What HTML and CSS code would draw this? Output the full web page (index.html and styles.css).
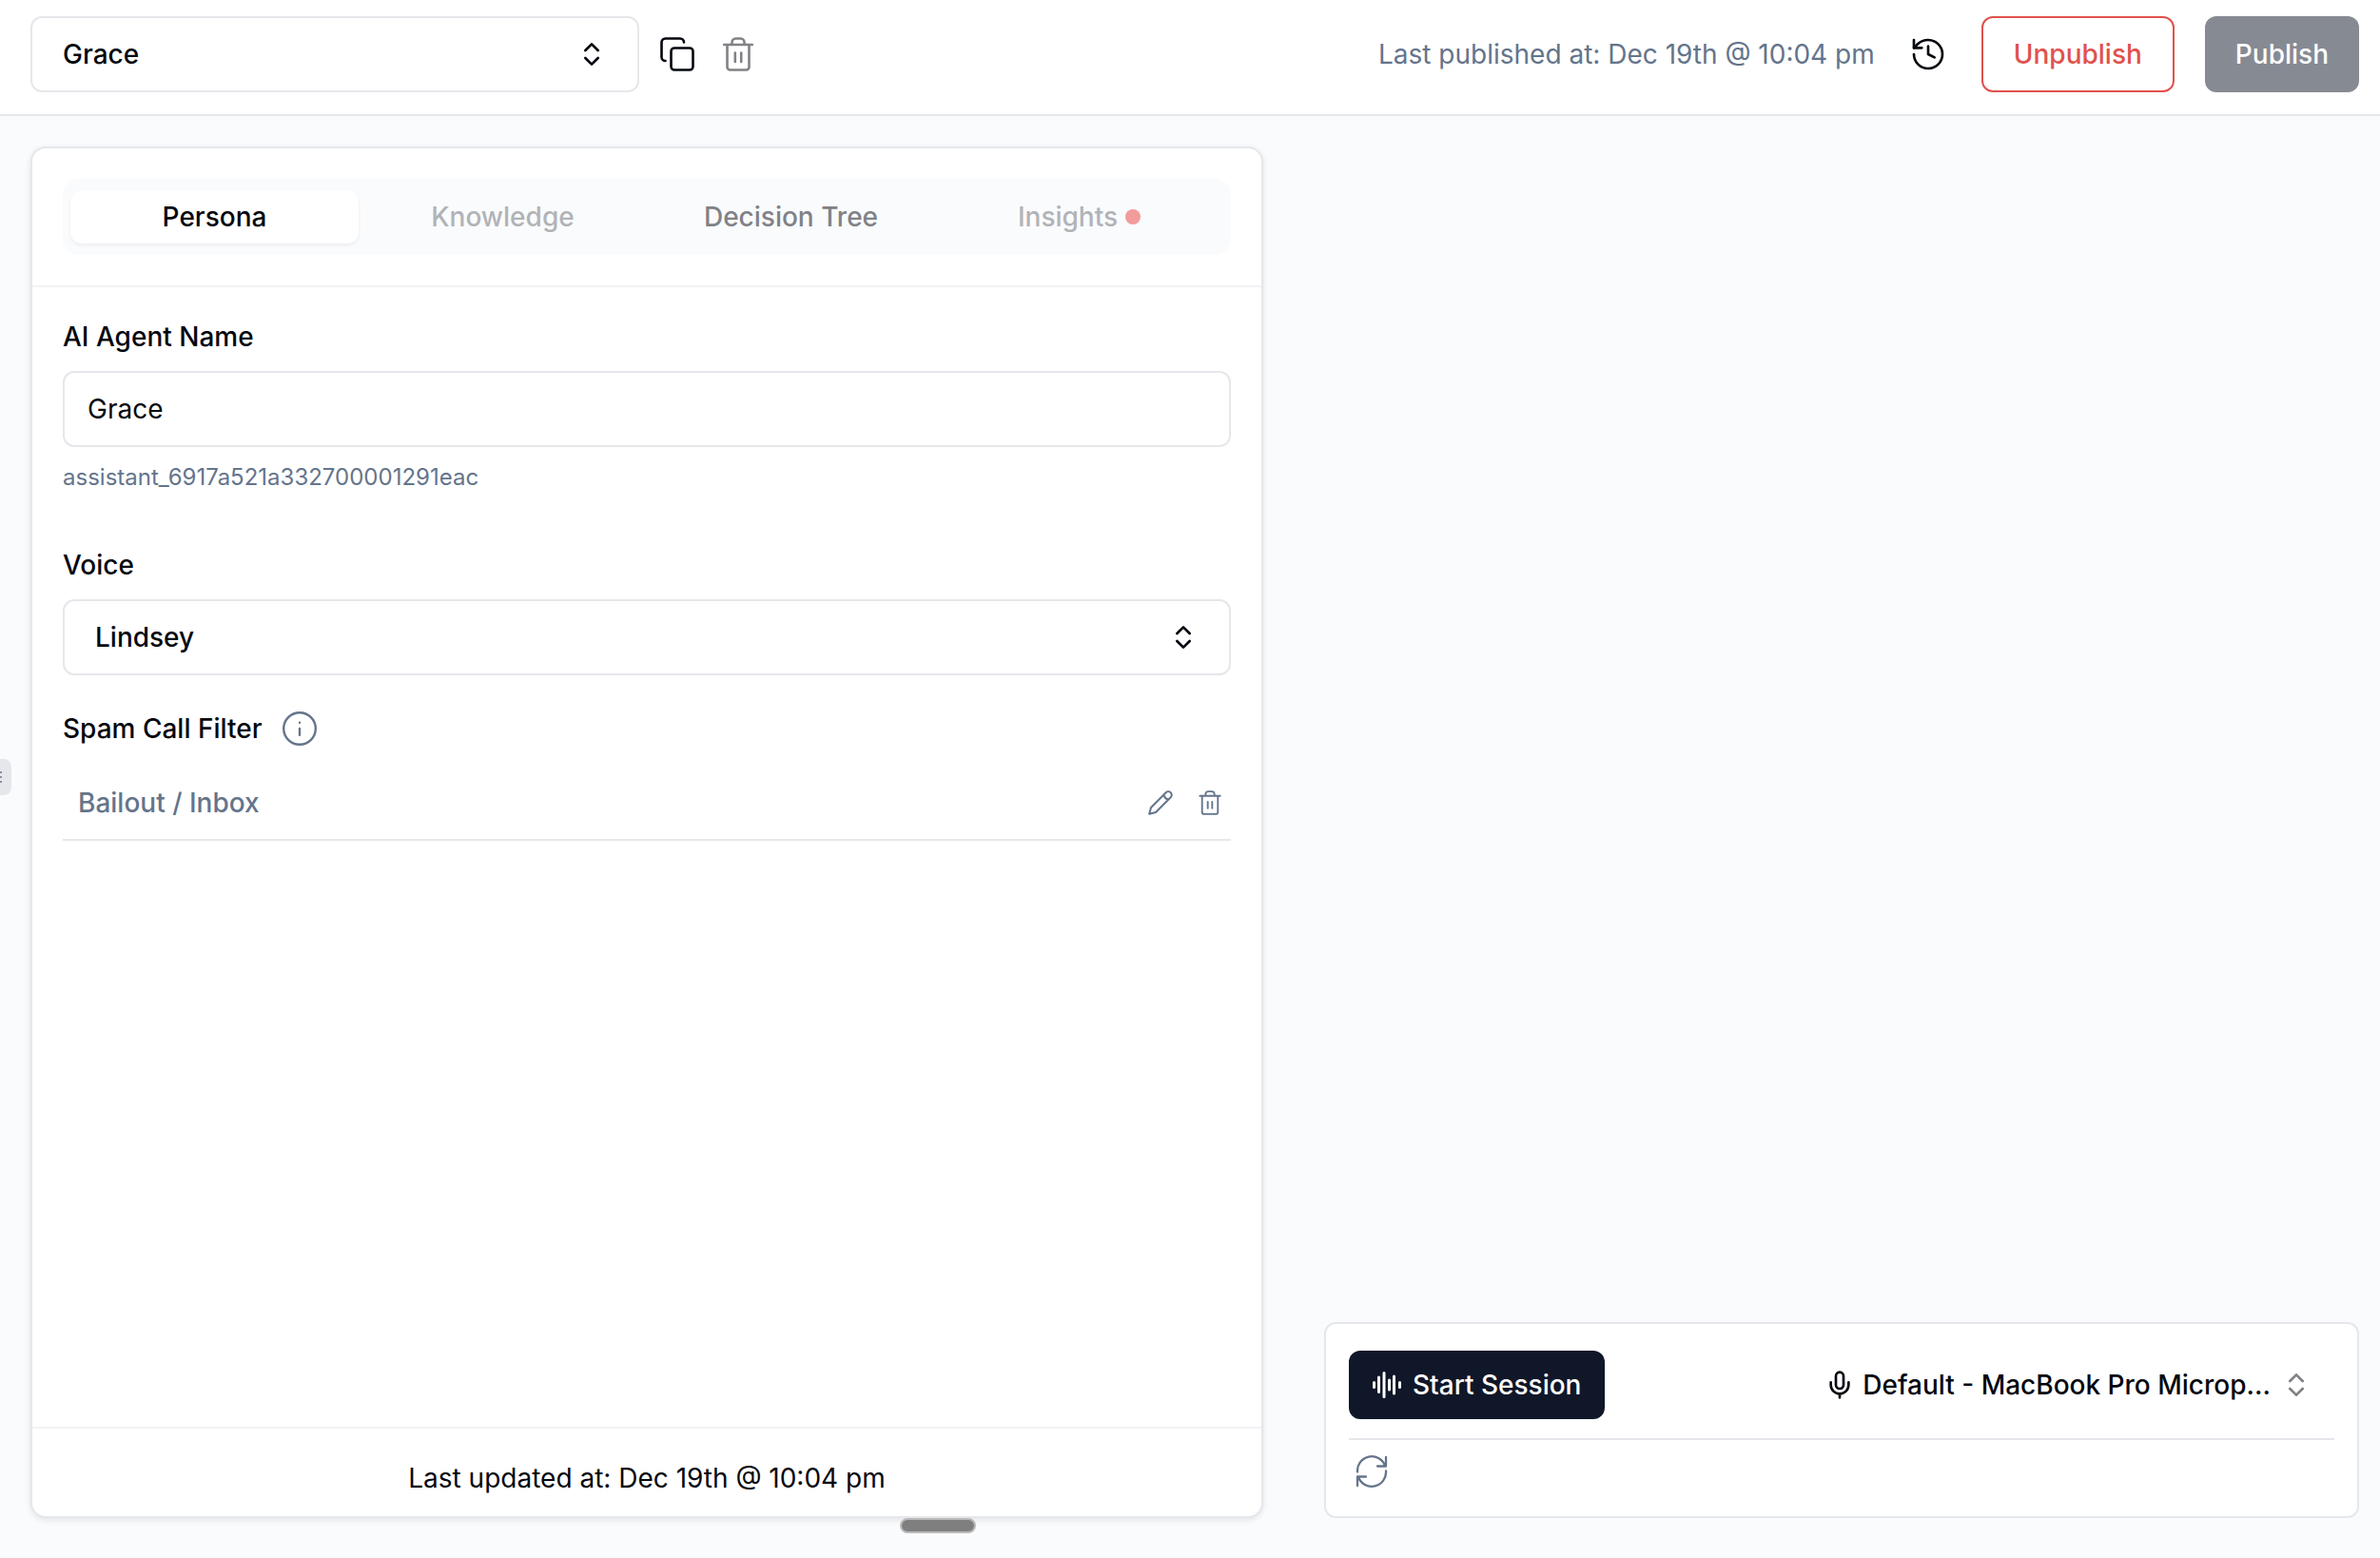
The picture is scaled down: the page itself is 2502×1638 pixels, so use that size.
FILE: index.html
```html
<!DOCTYPE html>
<html lang="en">
<head>
<meta charset="utf-8">
<meta name="viewport" content="width=device-width, initial-scale=1">
<title>Grace – AI Agent</title>
<link rel="stylesheet" href="styles.css">
</head>
<body>
<svg class="sprite" aria-hidden="true">
  <symbol id="updown" viewBox="0 0 24 24"><path d="m7 15 5 5 5-5M7 9l5-5 5 5"/></symbol>
  <symbol id="copy" viewBox="0 0 36 36"><rect x="11.500" y="11.500" width="23" height="23" rx="3.500"/><path d="M5.500 25a4 4 0 0 1-4-4V5.500a4 4 0 0 1 4-4h15.500a4 4 0 0 1 4 4"/></symbol>
  <symbol id="trash" viewBox="0 0 32 36"><path d="M1.200 8h29.600M4.500 8v23.500a3 3 0 0 0 3 3h17a3 3 0 0 0 3-3V8M9.500 8V5.500a4 4 0 0 1 4-4h5a4 4 0 0 1 4 4V8M12.800 16.500v9.500M19.200 16.500v9.500"/></symbol>
  <symbol id="history" viewBox="0 0 24 24"><path d="M3 12a9 9 0 1 0 9-9 9.750 9.750 0 0 0-6.740 2.740L3 8"/><path d="M3 3v5h5M12 7v5l4 2"/></symbol>
  <symbol id="info" viewBox="0 0 36 36"><circle cx="18" cy="18" r="16.800"/><path d="M18 18v6.800M18 11.700v.1"/></symbol>
  <symbol id="pencil" viewBox="0 0 26 26"><path d="M1.200 24.800 3 18 18.700 2.300a3.500 3.500 0 0 1 5 5L8 23zM16.500 4.500c.5 3 2 4.500 5 5"/></symbol>
  <symbol id="wave" viewBox="0 0 30 28"><path d="M1.500 11.500v5M6.500 6v15.500M12 1.500v25M17.500 9v10M22.500 5v18M28.500 11.500v5"/></symbol>
  <symbol id="mic" viewBox="0 0 24 24"><path d="M12 2a3 3 0 0 0-3 3v7a3 3 0 0 0 6 0V5a3 3 0 0 0-3-3M19 10v2a7 7 0 0 1-14 0v-2M12 19v3"/></symbol>
  <symbol id="refresh" viewBox="0 0 34 34"><path d="M2 17.500A15 15 0 0 1 31 11M32 2v9.500h-9M32 16.500A15 15 0 0 1 3 23M2 32v-9.500h9"/></symbol>
  <symbol id="grip" viewBox="0 0 12 16"><path d="M2 3v.1M2 8v.1M2 13v.1M7 3v.1M7 8v.1M7 13v.1"/></symbol>
</svg>

<header class="topbar">
  <button type="button" class="picker agent-picker"><span>Grace</span><svg class="icon icon-32"><use href="#updown"/></svg></button>
  <div class="agent-actions">
    <button type="button" class="icon-btn" aria-label="Duplicate agent"><svg class="icon icon-tool"><use href="#copy"/></svg></button>
    <button type="button" class="icon-btn faded" aria-label="Delete agent" disabled><svg class="icon icon-tool"><use href="#trash"/></svg></button>
  </div>
  <div class="publish">
    <p class="published-at">Last published at: Dec 19th @ 10:04 pm</p>
    <button type="button" class="icon-btn" aria-label="Version history"><svg class="icon icon-40"><use href="#history"/></svg></button>
    <div class="publish-buttons">
      <button type="button" class="btn btn-danger">Unpublish</button>
      <button type="button" class="btn btn-primary" disabled>Publish</button>
    </div>
  </div>
</header>

<main class="workspace">
  <button type="button" class="side-handle" aria-label="Resize sidebar"><svg class="icon icon-grip"><use href="#grip"/></svg></button>
  <section class="card">
    <div class="card-head">
      <div class="tabs" role="tablist">
        <button type="button" role="tab" class="tab active" aria-selected="true">Persona</button>
        <button type="button" role="tab" class="tab" disabled>Knowledge</button>
        <button type="button" role="tab" class="tab">Decision Tree</button>
        <button type="button" role="tab" class="tab" disabled>Insights<span class="dot"></span></button>
      </div>
    </div>
    <form class="form">
      <div class="field name-field">
        <label for="agent-name">AI Agent Name</label>
        <input id="agent-name" class="text-input" type="text" value="Grace">
        <p class="agent-id">assistant_6917a521a332700001291eac</p>
      </div>
      <div class="field">
        <label for="voice">Voice</label>
        <button type="button" id="voice" class="picker"><span>Lindsey</span><svg class="icon icon-32"><use href="#updown"/></svg></button>
      </div>
      <div class="filter">
        <h2 class="filter-title">Spam Call Filter
          <button type="button" class="icon-btn muted" aria-label="About the spam call filter"><svg class="icon icon-36"><use href="#info"/></svg></button>
        </h2>
        <div class="filter-row">
          <span>Bailout / Inbox</span>
          <div class="row-actions">
            <button type="button" class="icon-btn muted" aria-label="Edit"><svg class="icon icon-26"><use href="#pencil"/></svg></button>
            <button type="button" class="icon-btn muted" aria-label="Delete"><svg class="icon icon-26 icon-bold"><use href="#trash"/></svg></button>
          </div>
        </div>
      </div>
    </form>
    <footer class="card-foot">Last updated at: Dec 19th @ 10:04 pm</footer>
    <span class="drag-pill"></span>
  </section>

  <aside class="session">
    <div class="session-top">
      <button type="button" class="start"><svg class="icon icon-wave"><use href="#wave"/></svg>Start Session</button>
      <button type="button" class="mic-picker">
        <svg class="icon icon-32"><use href="#mic"/></svg>
        <span class="mic-name">Default - MacBook Pro Microp...</span>
        <svg class="icon icon-32 faded"><use href="#updown"/></svg>
      </button>
    </div>
    <div class="session-bottom">
      <button type="button" class="icon-btn muted" aria-label="Restart"><svg class="icon icon-refresh"><use href="#refresh"/></svg></button>
    </div>
  </aside>
</main>
</body>
</html>
```
FILE: styles.css
```css
:root {
  --ink: #05070f;
  --muted: #64748b;
  --line: #e5e7eb;
  --navy: #101729;
  --danger: #e0524d;
  --page: #fafbfd;
}

* { box-sizing: border-box; }

body {
  margin: 0;
  min-height: 100vh;
  display: flex;
  flex-direction: column;
  background: var(--page);
  color: var(--ink);
  font: 400 28px/40px Inter, sans-serif;
}

p, h2 { margin: 0; font-size: inherit; }

button, input {
  font: inherit;
  color: inherit;
}

button {
  margin: 0;
  padding: 0;
  border: 0;
  background: none;
  cursor: pointer;
}

.sprite { position: absolute; width: 0; height: 0; }

/* Icons */
.icon {
  display: block;
  flex: none;
  fill: none;
  stroke: currentColor;
  stroke-width: 2;
  stroke-linecap: round;
  stroke-linejoin: round;
}
.icon-26 { width: 26px; height: 26px; }
.icon-32 { width: 32px; height: 32px; }
.icon-36 { width: 36px; height: 36px; stroke-width: 2.4; }
.icon-40 { width: 40px; height: 40px; stroke-width: 1.6; }
.icon-bold { stroke-width: 2.6; }
.icon-tool { width: 36px; height: 36px; stroke-width: 2.6; }
.icon-wave { width: 30px; height: 28px; stroke-width: 3; }
.icon-refresh { width: 34px; height: 34px; stroke-width: 2.3; }
.icon-grip { width: 12px; height: 16px; }

.icon-btn { display: block; flex: none; }
.muted { color: var(--muted); }
.faded { opacity: .5; }

/* Top bar */
.topbar {
  display: flex;
  align-items: center;
  padding: 17px 22px 23px 32px;
  border-bottom: 2px solid var(--line);
  background: #fff;
}

.picker {
  display: flex;
  align-items: center;
  justify-content: space-between;
  width: 100%;
  height: 80px;
  padding: 0 32px;
  border: 2px solid var(--line);
  border-radius: 12px;
  background: #fff;
  font-weight: 500;
}
.agent-picker { width: 640px; }

.agent-actions { display: flex; gap: 28px; margin-left: 22px; }

.publish {
  display: flex;
  align-items: center;
  gap: 36px;
  margin-left: auto;
}
.published-at { color: var(--muted); }
.publish-buttons { display: flex; gap: 32px; }

.btn {
  height: 80px;
  padding: 0 32px;
  border-radius: 12px;
  font-weight: 500;
}
.btn-danger { border: 2px solid var(--danger); color: var(--danger); }
.btn-primary { background: var(--navy); color: #fff; opacity: .5; }

/* Workspace */
.workspace {
  position: relative;
  flex: 1;
  display: grid;
  grid-template-columns: 1296fr 1088fr;
  column-gap: 64px;
  padding: 32px 22px 42px 32px;
}

.side-handle {
  position: absolute;
  left: -12px;
  top: 676px;
  display: grid;
  place-items: center;
  width: 24px;
  height: 38px;
  border-radius: 8px;
  background: var(--line);
  color: #6b7280;
}

.card {
  position: relative;
  display: flex;
  flex-direction: column;
  border: 2px solid var(--line);
  border-radius: 16px;
  background: #fff;
  box-shadow: 0 2px 6px rgba(15, 23, 42, .1);
}
.card-head { padding: 32px; border-bottom: 2px solid #f1f2f4; }

.tabs {
  display: grid;
  grid-template-columns: repeat(4, 1fr);
  padding: 12px 8px;
  border-radius: 16px;
  background: var(--page);
}
.tab {
  display: flex;
  align-items: center;
  justify-content: center;
  gap: 8px;
  height: 56px;
  border-radius: 12px;
  color: #808287;
  font-weight: 500;
}
.tab:disabled { color: #b1b3b7; }
.tab.active {
  background: #fff;
  color: var(--ink);
  box-shadow: 0 2px 4px rgba(15, 23, 42, .06);
}
.dot { width: 16px; height: 16px; border-radius: 50%; background: #f29b9b; }

.form { flex: 1; padding: 32px; }
.field { display: flex; flex-direction: column; margin-bottom: 36px; }
.field label { margin-bottom: 16px; font-weight: 500; }
.text-input {
  width: 100%;
  height: 80px;
  padding: 0 24px;
  border: 2px solid var(--line);
  border-radius: 12px;
  background: #fff;
}
.agent-id {
  margin-top: 16px;
  color: var(--muted);
  font-size: 24px;
  line-height: 32px;
}
.name-field { margin-bottom: 56px; }

.filter-title {
  display: flex;
  align-items: center;
  gap: 22px;
  font-weight: 500;
}
.filter-row {
  display: flex;
  align-items: center;
  justify-content: space-between;
  margin-top: 20px;
  padding: 18px 9px 18px 16px;
  border-bottom: 2px solid var(--line);
  color: var(--muted);
  font-weight: 500;
}
.row-actions { display: flex; gap: 26px; }

.card-foot {
  padding: 32px 32px 20px;
  border-top: 2px solid #f1f2f4;
  text-align: center;
}

.drag-pill {
  position: absolute;
  left: 912px;
  top: calc(100% + 2px);
  width: 80px;
  height: 16px;
  border: 2px solid #b9b9b9;
  border-radius: 8px;
  background: #7f7f7f;
}

/* Session panel */
.session {
  align-self: end;
  padding: 28px 24px 30px;
  border: 2px solid var(--line);
  border-radius: 12px;
  background: #fff;
}
.session-top {
  display: flex;
  align-items: center;
  justify-content: space-between;
  padding-bottom: 20px;
  border-bottom: 2px solid var(--line);
}
.start {
  display: flex;
  align-items: center;
  gap: 12px;
  height: 72px;
  padding: 0 25px;
  border-radius: 12px;
  background: var(--navy);
  color: #fff;
  font-weight: 500;
}
.mic-picker {
  display: flex;
  align-items: center;
  gap: 8px;
  padding-right: 24px;
  font-weight: 500;
}
.mic-name { margin-right: 3px; }
.session-bottom { padding: 16px 7px 0; }
```
